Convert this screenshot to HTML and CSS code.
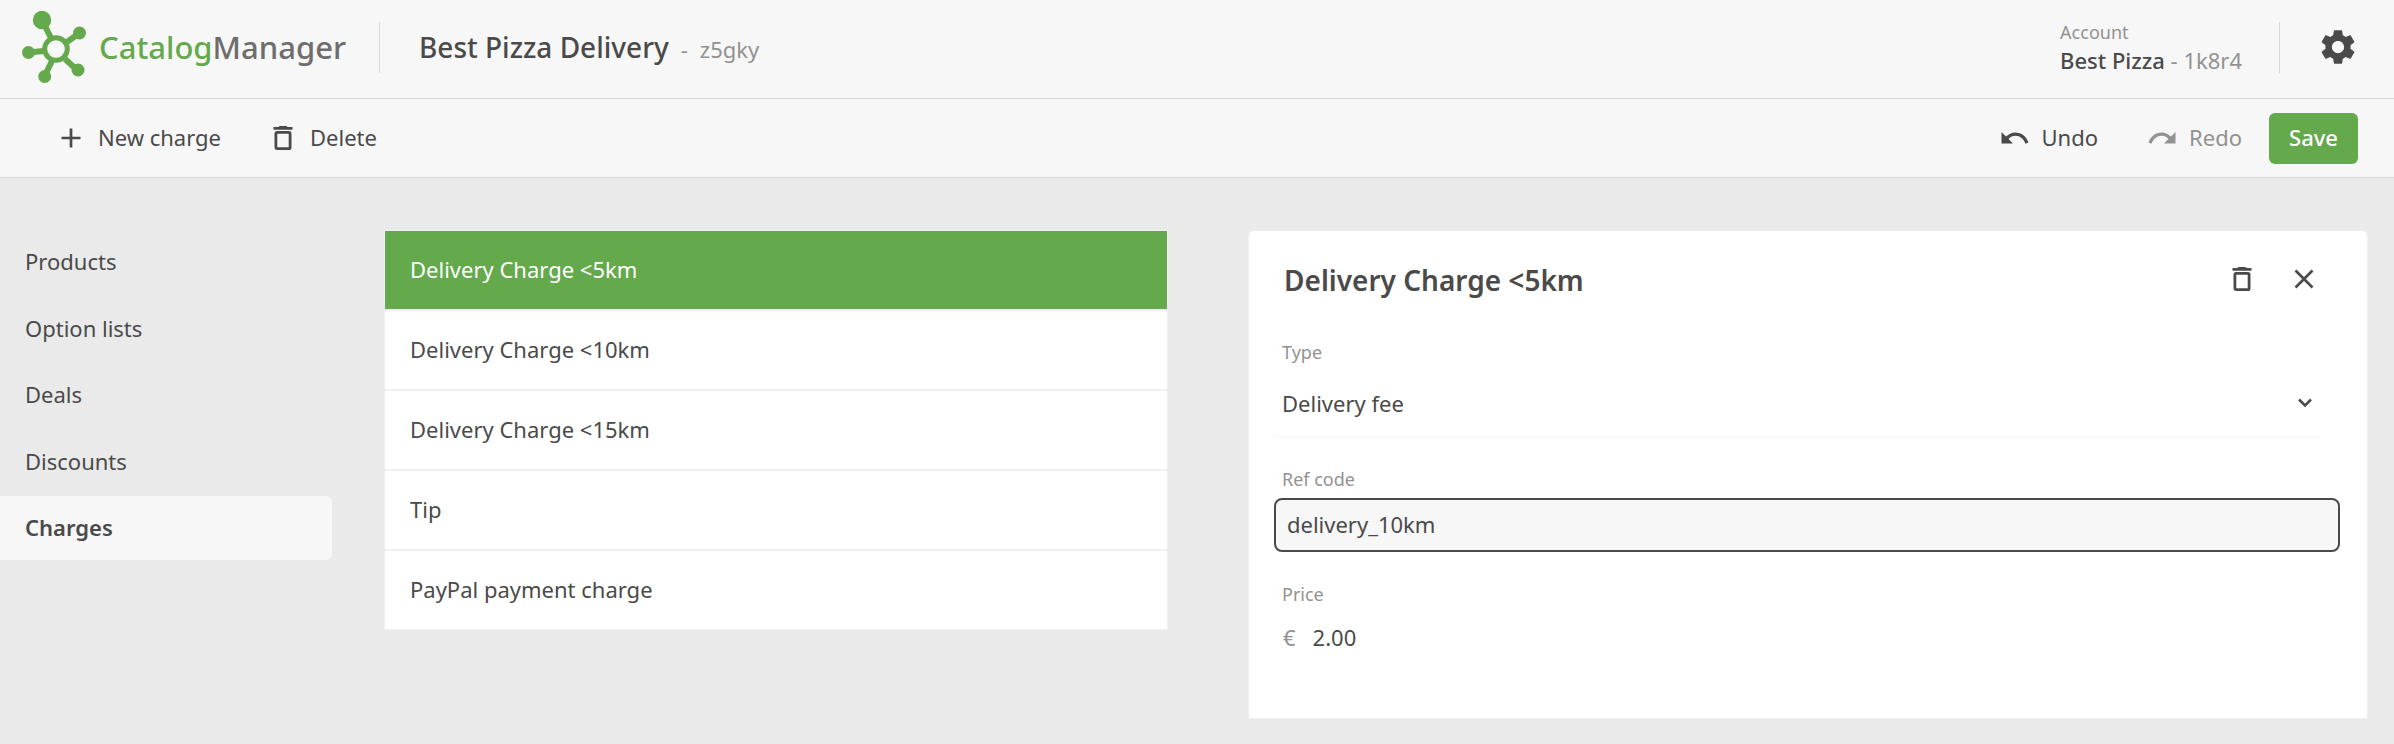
FILE: index.html
```html
<!DOCTYPE html>
<html lang="en">
<head>
<meta charset="utf-8">
<title>Catalog Manager</title>
<link rel="stylesheet" href="styles.css">
</head>
<body>
<header class="header">
  <a class="brand" href="#">
    <svg class="brand-mark" viewBox="0 0 64 72" aria-hidden="true">
      <g stroke="#64a94c" stroke-width="6" fill="none">
        <path d="M20 9 30 29M57.500 22 45 31M6 41.500 22 40M22 66 30 50M55 59 43 48"/>
        <circle cx="34" cy="38" r="11.300" stroke-width="5"/>
      </g>
      <g fill="#64a94c">
        <circle cx="20" cy="9" r="9.200"/><circle cx="57.500" cy="22" r="6.500"/><circle cx="6.500" cy="41.500" r="6.500"/><circle cx="22.700" cy="65.500" r="6.500"/><circle cx="56" cy="59" r="6.500"/>
      </g>
    </svg>
    <span class="brand-name"><span class="brand-first">Catalog</span>Manager</span>
  </a>
  <div class="catalog">
    <h1 class="catalog-name">Best Pizza Delivery</h1>
    <span class="muted">-</span>
    <span class="muted">z5gky</span>
  </div>
  <div class="account">
    <span class="caption">Account</span>
    <span class="account-name">Best Pizza <span class="muted">- 1k8r4</span></span>
  </div>
  <button class="settings" type="button" aria-label="Settings">
    <svg class="icon-gear" viewBox="0 0 24 24" aria-hidden="true"><path fill="currentColor" d="M19.140 12.940c.04-.3.06-.61.06-.94 0-.32-.02-.64-.07-.94l2.030-1.580c.18-.14.23-.41.12-.61l-1.920-3.320c-.12-.22-.37-.29-.59-.22l-2.390.96c-.5-.38-1.030-.7-1.620-.94l-.36-2.540c-.04-.24-.24-.41-.48-.41h-3.840c-.24 0-.43.17-.47.41l-.36 2.540c-.59.24-1.130.57-1.620.94l-2.390-.96c-.22-.08-.47 0-.59.22L2.740 8.870c-.12.21-.08.47.12.61l2.030 1.580c-.05.3-.09.63-.09.94s.02.64.07.94l-2.030 1.580c-.18.14-.23.41-.12.61l1.920 3.320c.12.22.37.29.59.22l2.390-.96c.5.38 1.030.7 1.620.94l.36 2.540c.05.24.24.41.48.41h3.840c.24 0 .44-.17.47-.41l.36-2.540c.59-.24 1.130-.56 1.620-.94l2.390.96c.22.08.47 0 .59-.22l1.920-3.320c.12-.22.07-.47-.12-.61l-2.010-1.580zM12 15.500c-1.930 0-3.500-1.570-3.500-3.500s1.570-3.500 3.500-3.500 3.500 1.570 3.500 3.500-1.570 3.500-3.500 3.500z"/></svg>
  </button>
</header>

<div class="toolbar">
  <button class="tool tool-new" type="button">
    <svg class="icon-plus" viewBox="0 0 20 20" aria-hidden="true"><path d="M10 .5v19M.5 10h19" stroke="currentColor" stroke-width="2.700"/></svg>
    <span class="tool-label">New charge</span>
  </button>
  <button class="tool tool-delete" type="button">
    <svg class="icon-trash" viewBox="0 0 20 24" aria-hidden="true"><path fill="currentColor" d="M.5 1H5.500L6.500 0h7l1 1h5v2.700H.5z"/><rect x="2.900" y="6.400" width="14.200" height="16.200" rx="1.200" fill="none" stroke="currentColor" stroke-width="2.800"/></svg>
    <span class="tool-label">Delete</span>
  </button>
  <div class="tool-actions">
    <button class="tool tool-undo" type="button">
      <svg class="icon-arrow" viewBox="0 0 28 14" aria-hidden="true"><path fill="currentColor" d="M.5 1v11.500H12L7.500 8c2.200-2.200 4-3.200 6.800-3.200 4.800 0 8.400 3.200 10.200 8l3-1.200C25.500 5.600 20.600 1.500 14.300 1.500 10.500 1.500 7.600 3.200 5 5.500z"/></svg>
      <span class="tool-label">Undo</span>
    </button>
    <button class="tool tool-redo" type="button" disabled>
      <svg class="icon-arrow" viewBox="0 0 28 14" aria-hidden="true"><path fill="currentColor" d="M27.500 1v11.500H16L20.500 8c-2.200-2.200-4-3.200-6.800-3.200-4.800 0-8.400 3.200-10.200 8l-3-1.200C2.500 5.600 7.400 1.500 13.700 1.500c3.800 0 6.700 1.700 9.300 4z"/></svg>
      <span class="tool-label">Redo</span>
    </button>
    <button class="save" type="button">Save</button>
  </div>
</div>

<main class="main">
  <nav class="nav" aria-label="Catalog sections">
    <a class="nav-item" href="#">Products</a>
    <a class="nav-item" href="#">Option lists</a>
    <a class="nav-item" href="#">Deals</a>
    <a class="nav-item" href="#">Discounts</a>
    <a class="nav-item nav-item-active" href="#" aria-current="page">Charges</a>
  </nav>
  <div class="columns">
    <div class="charges">
      <button class="charge charge-active" type="button">Delivery Charge &lt;5km</button>
      <button class="charge" type="button">Delivery Charge &lt;10km</button>
      <button class="charge" type="button">Delivery Charge &lt;15km</button>
      <button class="charge" type="button">Tip</button>
      <button class="charge" type="button">PayPal payment charge</button>
    </div>
    <section class="panel">
      <div class="panel-head">
        <h2 class="panel-title">Delivery Charge &lt;5km</h2>
        <button class="panel-button" type="button" aria-label="Delete charge">
          <svg class="icon-trash" viewBox="0 0 20 24" aria-hidden="true"><path fill="currentColor" d="M.5 1H5.500L6.500 0h7l1 1h5v2.700H.5z"/><rect x="2.900" y="6.400" width="14.200" height="16.200" rx="1.200" fill="none" stroke="currentColor" stroke-width="2.800"/></svg>
        </button>
        <button class="panel-button" type="button" aria-label="Close">
          <svg class="icon-close" viewBox="0 0 20 20" aria-hidden="true"><path d="M1.500 1.500l17 17M18.500 1.500l-17 17" stroke="currentColor" stroke-width="2.700"/></svg>
        </button>
      </div>
      <div class="field">
        <label class="caption" for="type">Type</label>
        <div class="select-row">
          <select class="select" id="type"><option>Delivery fee</option></select>
          <svg class="icon-chevron" viewBox="0 0 16 10" aria-hidden="true"><path d="M2 1.500l6 6 6-6" fill="none" stroke="currentColor" stroke-width="2.500"/></svg>
        </div>
      </div>
      <div class="field">
        <label class="caption" for="ref">Ref code</label>
        <input class="ref" id="ref" type="text" value="delivery_10km">
      </div>
      <div class="field">
        <label class="caption" for="price">Price</label>
        <div class="price-row">
          <span class="muted">€</span>
          <input class="price" id="price" type="text" value="2.00">
        </div>
      </div>
    </section>
  </div>
</main>
</body>
</html>
```

FILE: styles.css
```css
* { box-sizing: border-box; }

body {
  margin: 0;
  min-height: 100vh;
  background: #eaeaea;
  color: #4a4a4a;
  font-family: "Noto Sans", "Open Sans", sans-serif;
  font-size: 22px;
  line-height: 32px;
}

button, input, select {
  margin: 0;
  padding: 0;
  border: 0;
  background: none;
  color: inherit;
  font: inherit;
}

a { color: inherit; text-decoration: none; }
svg { display: block; flex: none; }

.muted { color: #929292; }
.caption { color: #929292; font-size: 18px; line-height: 24px; }

.header {
  display: flex;
  align-items: center;
  height: 99px;
  padding: 0 35px 4px 22px;
  background: #f7f7f7;
  border-bottom: 1px solid #d8d8d8;
}

.brand {
  display: flex;
  align-items: center;
  gap: 13px;
  width: 358px;
  height: 51px;
  border-right: 1px solid #d8d8d8;
}
.brand-mark { width: 64px; height: 72px; }
.brand-name { color: #6d6d6d; font-size: 31px; font-weight: 500; }
.brand-first { color: #64a94c; }

.catalog { display: flex; align-items: baseline; gap: 12px; margin-left: 39px; padding-top: 2px; }
.catalog-name { margin: 0; font-size: 28px; font-weight: 500; }

.account {
  display: flex;
  flex-direction: column;
  margin-left: auto;
  padding-top: 2px;
  padding-right: 37px;
}
.account-name { font-weight: 500; }
.account-name .muted { font-weight: 400; }

.settings {
  display: flex;
  align-items: center;
  height: 51px;
  padding-left: 37px;
  border-left: 1px solid #d8d8d8;
}
.icon-gear { width: 42px; height: 42px; }

.toolbar {
  display: flex;
  align-items: center;
  height: 79px;
  padding: 0 36px 0 61px;
  background: #f7f7f7;
  border-bottom: 1px solid #d8d8d8;
}
.tool { display: flex; align-items: center; gap: 17px; }
.tool-label { padding-bottom: 2px; }
.tool-delete { margin-left: 52px; }
.tool-redo { margin-left: 50px; color: #929292; }
.tool-undo, .tool-redo { gap: 13px; }
.tool-actions { display: flex; align-items: center; margin-left: auto; }
.icon-plus, .icon-close { width: 20px; height: 20px; }
.icon-trash { width: 20px; height: 24px; }
.icon-arrow { width: 28px; height: 14px; }
.save {
  width: 89px;
  height: 51px;
  margin-left: 27px;
  padding-bottom: 2px;
  border-radius: 6px;
  background: #64a94c;
  color: #fff;
  font-weight: 500;
}

.main { display: flex; align-items: flex-start; padding: 52px 26px 25px 0; }

.nav {
  display: grid;
  align-content: space-between;
  width: 332px;
  min-height: 330px;
}
.nav-item { height: 64px; padding: 15px 25px; border-radius: 0 6px 6px 0; }
.nav-item-active { background: #f7f7f7; font-weight: 600; }

.columns {
  display: grid;
  grid-template-columns: 7fr 10fr;
  gap: 80px;
  align-items: start;
  flex: 1;
  margin-left: 52px;
}

.charges {
  display: grid;
  gap: 2px;
  border: 1px solid #f0f0f0;
  background: #f0f0f0;
}
.charge {
  height: 78px;
  padding: 0 25px 2px;
  background: #fff;
  text-align: left;
}
.charge-active { background: #64a94c; color: #fff; }

.panel {
  padding: 24px 27px 50px 26px;
  border: 1px solid #f0f0f0;
  border-radius: 6px 6px 0 0;
  background: #fff;
}
.panel-head { display: flex; align-items: center; padding: 0 26px 5px 9px; }
.panel-title { flex: 1; margin: 0; font-size: 28px; font-weight: 600; line-height: 50px; }
.panel-button { padding: 0 0 2px; }
.panel-button + .panel-button { margin-left: 42px; }

.field { display: flex; flex-direction: column; margin-top: 30px; }
.field .caption { padding-left: 7px; }
.select-row {
  display: flex;
  align-items: center;
  height: 73px;
  margin-right: 20px;
  padding-top: 6px;
  border-bottom: 1px solid #f3f3f3;
}
.select { flex: 1; padding-left: 7px; margin-right: -16px; appearance: none; }
.icon-chevron { width: 16px; height: 10px; margin-right: 7px; pointer-events: none; }
.ref {
  height: 54px;
  margin-top: 7px;
  margin-left: -1px;
  padding: 0 11px 2px;
  border: 2px solid #4a4a4a;
  border-radius: 8px;
  background: #f7f7f7;
}
.price-row { display: flex; align-items: center; gap: 17px; height: 62px; padding-left: 8px; }
.price { flex: 1; }
```
